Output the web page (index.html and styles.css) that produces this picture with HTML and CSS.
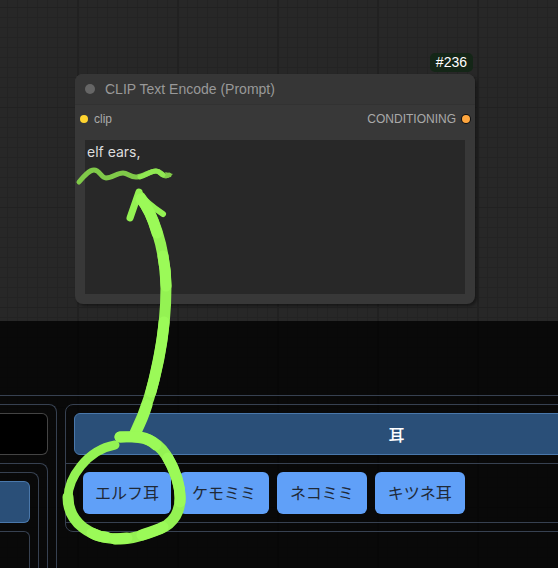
FILE: index.html
```html
<!DOCTYPE html>
<html lang="ja">
<head>
<meta charset="utf-8">
<meta name="viewport" content="width=device-width, initial-scale=1">
<title>CLIP Text Encode (Prompt)</title>
<link rel="stylesheet" href="styles.css">
</head>
<body>
<div class="page">
  <main class="graph">
    <section class="node">
      <span class="node-id">#236</span>
      <header class="node-header">
        <span class="dot dot-collapse"></span>
        <label class="node-title" for="prompt">CLIP Text Encode (Prompt)</label>
      </header>
      <div class="slots">
        <span class="slot"><span class="dot dot-clip"></span>clip</span>
        <span class="slot">CONDITIONING<span class="dot dot-cond"></span></span>
      </div>
      <textarea class="prompt" id="prompt" spellcheck="false">elf ears,</textarea>
    </section>
  </main>

  <section class="drawer">
    <div class="columns">
      <div class="side">
        <div class="side-field"></div>
        <div class="side-group">
          <div class="side-inner">
            <div class="side-heading"></div>
            <div class="side-list"></div>
          </div>
        </div>
      </div>
      <div class="category">
        <h2 class="category-title">耳</h2>
        <div class="tags">
          <button class="tag tag-active" type="button">エルフ耳</button>
          <button class="tag" type="button">ケモミミ</button>
          <button class="tag" type="button">ネコミミ</button>
          <button class="tag" type="button">キツネ耳</button>
        </div>
      </div>
    </div>
  </section>

  <svg class="marker" width="558" height="568" viewBox="0 0 558 568" aria-hidden="true">
    <g class="ink ink-thin">
      <path d="M79 182C84 176 89 170 94 170C100 170 101 178 106 178C112 178 117 173 123 173C128 173 131 178 137 177C144 176 150 171 156 171C161 171 162 176 166 176L169 175"/>
      <path class="light" d="M140 177C146 175 151 171 156 171C159 171 161 174 163 175"/>
    </g>
    <path class="taper" d="M165 172L173 174L168 178Z"/>
    <g class="ink">
      <path class="tip" d="M130 218L139 192"/>
      <path class="barb" d="M139 193C144 200 154 208 163 214"/>
      <path d="M140 197C152 212 165 245 166 286C166 331 157 388 135 433"/>
      <path class="light" d="M141 199C147 206 153 219 157 233M163 256C165 266 166 276 166 286M164 322C162 347 157 368 151 392M147 405C144 415 140 424 136 432"/>
      <path class="ring-tail" d="M115 445C87 450 68 478 68 498"/>
      <path class="ring" d="M68 497C68 523 91 539 121 539C132 539 145 535 160 529C174 523 181 511 180 495C179 482 173 466 166 455C156 440 145 436 120 437"/>
      <path class="light" d="M92 533C97 536 101 537 106 537M115 539L127 538M142 535C150 532 158 530 163 527M180 502C181 486 175 470 168 458M156 445C147 436 137 436 120 437"/>
    </g>
  </svg>
</div>
</body>
</html>
```
FILE: styles.css
```css
* {
  box-sizing: border-box;
}

body {
  margin: 0;
  background: #262626;
  font-family: "Liberation Sans", "Noto Sans CJK JP", sans-serif;
}

.page {
  position: relative;
  display: flex;
  flex-direction: column;
  height: 100vh;
  overflow: hidden;
  background-color: #272727;
  background-image:
    linear-gradient(90deg, #212121 2px, transparent 2px),
    linear-gradient(#212121 1px, transparent 1px),
    linear-gradient(90deg, #232323 1px, transparent 1px),
    linear-gradient(#232323 1px, transparent 1px);
  background-size: 100px 100px, 100px 100px, 10px 10px, 10px 10px;
  background-position: 77px 0, 0 7px, 7px 0, 0 7px;
}

.graph {
  padding: 74px 83px 17px 75px;
}

.node {
  position: relative;
  padding-bottom: 10px;
  border-radius: 8px;
  background: #383838;
  box-shadow: 2px 2px 3px rgba(0, 0, 0, 0.4);
}

.node-id {
  position: absolute;
  right: 2px;
  bottom: 100%;
  margin-bottom: 2px;
  padding: 0 6px;
  border-radius: 5px;
  background: #142617;
  color: #fff;
  font-size: 14px;
  line-height: 19px;
}

.node-header {
  display: flex;
  align-items: center;
  gap: 10px;
  height: 31px;
  padding: 0 10px;
  border-bottom: 1px solid #323232;
  border-radius: 8px 8px 0 0;
  background: #363636;
}

.node-title {
  color: #999;
  font-size: 14px;
}

.dot {
  width: 8px;
  height: 8px;
  border-radius: 50%;
}

.dot-collapse {
  width: 10px;
  height: 10px;
  background: #666;
}

.dot-clip {
  background: #ffd42f;
}

.dot-cond {
  background: #ffa63e;
  box-shadow: 0 0 0 1px #111;
}

.slots {
  display: flex;
  justify-content: space-between;
  padding: 4px 5px 11px;
}

.slot {
  display: flex;
  align-items: center;
  gap: 6px;
  color: #aaa;
  font-size: 12px;
  line-height: 20px;
}

.prompt {
  display: block;
  width: calc(100% - 20px);
  height: 154px;
  margin: 0 10px;
  padding: 2px;
  border: 0;
  outline: 0;
  resize: none;
  background: #282828;
  color: #ddd;
  font-family: Inter, sans-serif;
  font-size: 14px;
  line-height: 20px;
}

.drawer {
  flex: 1;
  min-height: 0;
  padding-top: 74px;
  background: rgba(0, 0, 0, 0.77);
}

.columns {
  display: grid;
  grid-template-columns: 57px 1fr;
  gap: 8px;
  height: 100%;
  padding-top: 8px;
  border-top: 1px solid #374151;
}

.side,
.side-group,
.side-inner {
  display: flex;
  flex-direction: column;
  gap: 8px;
  padding: 8px 8px 0 0;
  border: 1px solid #374151;
  border-width: 1px 1px 0 0;
  border-radius: 0 8px 0 0;
}

.side-group,
.side-inner,
.side-list {
  flex: 1;
}

.side-field,
.side-heading {
  height: 42px;
  border: 1px solid #444;
  border-left: 0;
  border-radius: 0 6px 6px 0;
  background: #000;
}

.side-heading {
  border-color: #4a78ab;
  background: #2a4f78;
}

.side-list {
  border: 1px solid #374151;
  border-width: 1px 1px 0 0;
  border-radius: 0 6px 0 0;
}

/* The category is wider than the window and runs off its right edge. */
.category {
  align-self: start;
  margin-right: -170px;
  padding: 8px 0;
  border: 1px solid #374151;
  border-radius: 8px;
}

.category-title {
  height: 42px;
  margin: 0 8px 8px;
  border: 1px solid #4a78ab;
  border-radius: 6px;
  background: #2a4f78;
  color: #fff;
  font-family: "Noto Sans CJK JP", sans-serif;
  font-size: 16px;
  font-weight: 500;
  line-height: 40px;
  text-align: center;
}

.tags {
  display: flex;
  gap: 8px;
  padding: 8px 17px;
  border: 1px solid #374151;
  border-width: 1px 0;
}

.tag {
  height: 42px;
  padding: 0 13px 2px;
  border: 0;
  border-radius: 6px;
  background: #60a0f8;
  color: #1f2937;
  font-family: "Noto Sans CJK JP", sans-serif;
  font-size: 16px;
  line-height: 40px;
}

.tag-active {
  padding: 0 12px 2px;
}

.marker {
  position: absolute;
  top: 0;
  left: 0;
  pointer-events: none;
}

.ink {
  fill: none;
  stroke: #94f253;
  stroke-width: 11px;
  stroke-linecap: round;
  stroke-linejoin: round;
}

.ink-thin {
  stroke: #80ca49;
  stroke-width: 5px;
}

.taper {
  fill: #80ca49;
}

.ink .light {
  stroke: #9bfa58;
}

.ink-thin .light {
  stroke: #90e852;
}

.ink .tip {
  stroke-width: 7px;
}

.ink .barb {
  stroke-width: 6px;
}

.ink .ring-tail {
  stroke-width: 9px;
}
```
